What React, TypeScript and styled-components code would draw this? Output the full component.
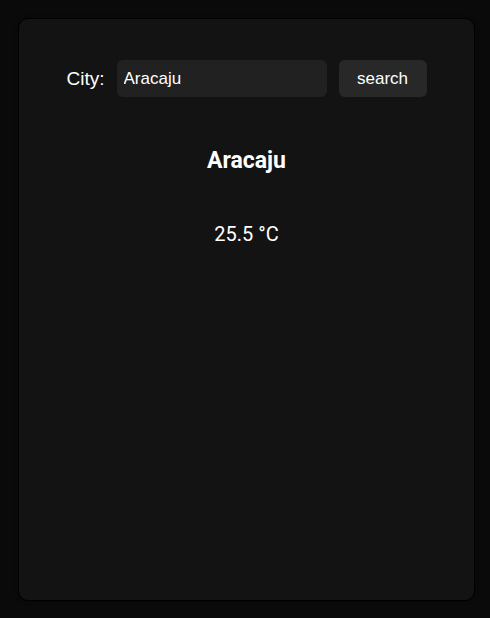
import React, { useState } from 'react';
import styled, { createGlobalStyle } from 'styled-components';

const GlobalStyle = createGlobalStyle`
  * {
    box-sizing: border-box;
  }

  body {
    margin: 0;
    background: #0a0a0a;
    color: #fff;
    font-family: Roboto, 'Liberation Sans', sans-serif;
  }
`;

const Page = styled.div`
  min-height: 618px;
  padding: 18px 15px 17px 18px;
  display: flex;
`;

const Card = styled.main`
  flex: 1;
  background: #131313;
  border: 1px solid #000;
  border-radius: 10px;
  box-shadow: 0 0 4px rgba(0, 0, 0, 0.4);
  padding: 41px 20px;
  display: flex;
  flex-direction: column;
  align-items: center;
`;

const SearchForm = styled.form`
  display: flex;
  align-items: center;
  gap: 12px;
`;

const Label = styled.label`
  font-family: 'Liberation Sans', Arial, sans-serif;
  font-size: 19px;
  color: #fff;
`;

const Input = styled.input`
  width: 210px;
  height: 37px;
  padding: 0 7px;
  border: none;
  border-radius: 6px;
  background: #212121;
  color: #fff;
  font-family: 'Liberation Sans', Arial, sans-serif;
  font-size: 17px;
  outline: none;
`;

const Button = styled.button`
  width: 88px;
  height: 37px;
  border: none;
  border-radius: 6px;
  background: #282828;
  color: #fff;
  font-family: 'Liberation Sans', Arial, sans-serif;
  font-size: 17px;
  cursor: pointer;
`;

const CityName = styled.h2`
  margin: 50px 0 0;
  font-size: 23px;
  font-weight: 700;
`;

const Temperature = styled.p`
  margin: 48px 0 0;
  font-size: 20px;
`;

const App = () => {
  const [city, setCity] = useState('Aracaju');

  return (
    <>
      <GlobalStyle />
      <Page>
        <Card>
          <SearchForm onSubmit={(e) => e.preventDefault()}>
            <Label htmlFor="city">City:</Label>
            <Input id="city" value={city} onChange={(e) => setCity(e.target.value)} />
            <Button type="submit">search</Button>
          </SearchForm>
          <CityName>Aracaju</CityName>
          <Temperature>25.5 °C</Temperature>
        </Card>
      </Page>
    </>
  );
};

export default App;
